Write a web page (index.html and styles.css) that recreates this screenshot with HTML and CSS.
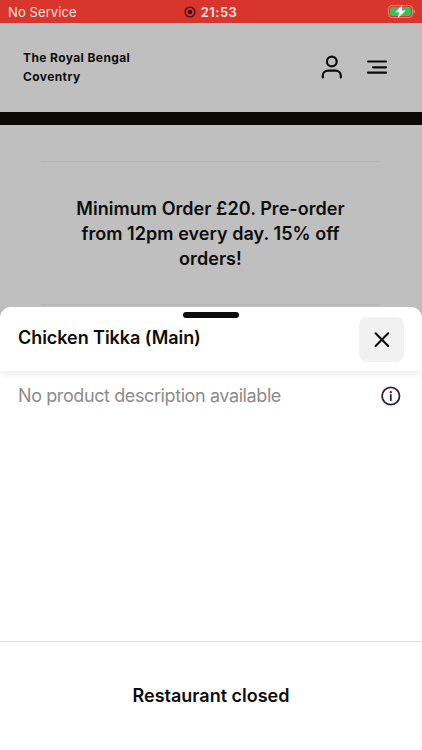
FILE: index.html
```html
<!DOCTYPE html>
<html lang="en">
<head>
    <meta charset="UTF-8">
    <meta name="viewport" content="width=device-width, initial-scale=1.0">
    <title>The Royal Bengal Coventry</title>
    <link rel="stylesheet" href="styles.css">
</head>
<body>

    <div class="status-bar">
        <span class="carrier">No Service</span>
        <div class="clock">
            <svg class="record-icon" width="12" height="12" viewBox="0 0 12 12">
                <circle cx="6" cy="6" r="4.9" fill="none" stroke="#3d0806" stroke-width="1.3"/>
                <circle cx="6" cy="6" r="2.2" fill="#2a0504"/>
            </svg>
            <span class="time">21:53</span>
        </div>
        <svg class="battery-icon" width="28" height="14" viewBox="0 0 28 14">
            <rect x="1.500" y="0.500" width="24" height="12" rx="3.400" fill="none" stroke="#e98c74" stroke-width="1"/>
            <rect x="3.100" y="2.100" width="20.800" height="8.800" rx="2" fill="#41bd57"/>
            <path d="M26.500 4.500v4c1-.3 1.400-1.100 1.400-2s-.4-1.700-1.400-2z" fill="#e98c74"/>
            <path d="M15.200 0L8.300 7.200h4L10.800 13l8-7.400h-4.200z" fill="#fff"/>
        </svg>
    </div>

    <header class="header">
        <h1 class="brand">The Royal Bengal<br>Coventry</h1>
        <div class="header-icons">
            <svg width="22" height="24" viewBox="0 0 22 24" fill="none" stroke="#0b0b0b" stroke-width="2.200" stroke-linecap="round">
                <circle cx="10.800" cy="6.500" r="4.900"/>
                <path d="M1.800 22.500v-1.700c0-3 2.300-5.200 5.200-5.200h7.600c2.900 0 5.200 2.200 5.200 5.200v1.700"/>
            </svg>
            <svg width="22" height="16" viewBox="0 0 22 16" fill="none" stroke="#0b0b0b" stroke-width="2.200" stroke-linecap="round">
                <path d="M2 2.500h18M7 8.300h13M2 13.700h18"/>
            </svg>
        </div>
    </header>
    <div class="banner"></div>

    <main class="content">
        <p class="notice">Minimum Order £20. Pre-order from 12pm every day. 15% off orders!</p>
    </main>

    <section class="sheet">
        <div class="sheet-header">
            <div class="handle"></div>
            <h2 class="product-name">Chicken Tikka (Main)</h2>
            <button class="close-btn" aria-label="Close">
                <svg width="18" height="18" viewBox="0 0 18 18" fill="none" stroke="#0b0b0b" stroke-width="2.100" stroke-linecap="round">
                    <path d="M2.600 3.300l12.600 12.600M15.200 3.300l-12.600 12.600"/>
                </svg>
            </button>
        </div>
        <div class="sheet-body">
            <span class="description">No product description available</span>
            <svg width="20" height="20" viewBox="0 0 20 20">
                <circle cx="9.800" cy="10" r="8.700" fill="none" stroke="#36202e" stroke-width="1.800"/>
                <circle cx="9.800" cy="6.200" r="1.150" fill="#36202e"/>
                <path d="M9.800 9v5.200" stroke="#36202e" stroke-width="1.800" stroke-linecap="round"/>
            </svg>
        </div>
        <div class="sheet-footer">Restaurant closed</div>
    </section>

</body>
</html>
```

FILE: styles.css
```css
* {
    box-sizing: border-box;
}
body {
    position: relative;
    height: 750px;
    margin: 0;
    overflow: hidden;
    background-color: #bfbfbf;
    color: #0d0d0d;
    font-family: Inter, "Liberation Sans", sans-serif;
}
h1, h2, p {
    margin: 0;
}
svg {
    display: block;
}
.status-bar {
    display: grid;
    grid-template-columns: 1fr auto 1fr;
    align-items: center;
    height: 23px;
    padding: 0 7px 0 8px;
    background-color: #d8352c;
    color: #fce3df;
}
.carrier {
    font-size: 13px;
    letter-spacing: 0.1px;
}
.clock {
    display: flex;
    align-items: center;
    gap: 5px;
    margin-right: 2px;
}
.time {
    font-size: 13px;
    font-weight: 600;
    letter-spacing: 0.5px;
}
.battery-icon {
    justify-self: end;
}
.header {
    display: flex;
    align-items: center;
    justify-content: space-between;
    height: 89px;
    padding: 0 34px 2px 23px;
}
.brand {
    font-size: 12px;
    font-weight: 700;
    line-height: 19px;
    letter-spacing: 0.4px;
}
.header-icons {
    display: flex;
    align-items: center;
    gap: 23px;
}
.banner {
    height: 13px;
    background-color: #0b0a08;
}
.content {
    padding: 36px 42px 0 41px;
}
.notice {
    height: 144px;
    padding: 34px 30px 0;
    border-top: 1px solid #b5b5b5;
    border-bottom: 1px solid #b5b5b5;
    font-size: 18px;
    font-weight: 600;
    line-height: 25px;
    letter-spacing: 0.05px;
    text-align: center;
}
.sheet {
    position: absolute;
    top: 307px;
    right: 0;
    bottom: 0;
    left: 0;
    display: flex;
    flex-direction: column;
    border-radius: 11px 11px 0 0;
    background-color: #fff;
}
.sheet-header {
    position: relative;
    display: flex;
    align-items: center;
    justify-content: space-between;
    height: 64px;
    padding: 0 18px;
    box-shadow: 0 2px 9px rgba(0, 0, 0, 0.09);
    border-radius: 11px 11px 0 0;
    clip-path: inset(0 0 -16px 0);
}
.handle {
    position: absolute;
    top: 5px;
    left: 183px;
    width: 56px;
    height: 6px;
    border-radius: 3px;
    background-color: #0d0d0d;
}
.product-name {
    padding-bottom: 3px;
    font-size: 18px;
    font-weight: 600;
    letter-spacing: -0.05px;
}
.close-btn {
    display: flex;
    align-items: center;
    justify-content: center;
    width: 45px;
    height: 45px;
    padding: 0;
    border: none;
    border-radius: 8px;
    background-color: #f1f1f1;
}
.sheet-body {
    display: flex;
    flex: 1;
    align-items: flex-start;
    justify-content: space-between;
    padding: 15px 21px 0 18px;
}
.description {
    color: #8b8b8b;
    font-size: 18px;
    line-height: 20px;
    letter-spacing: -0.4px;
}
.sheet-footer {
    height: 109px;
    border-top: 1px solid #dedede;
    font-size: 18px;
    font-weight: 600;
    line-height: 108px;
    text-align: center;
}
```
